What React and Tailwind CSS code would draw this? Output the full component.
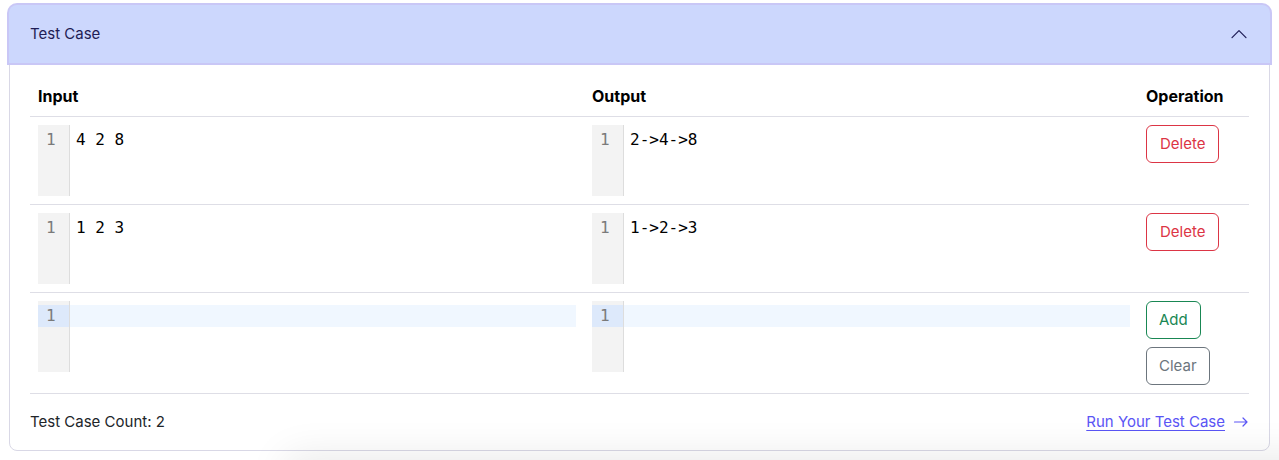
import React from "react";

function Editor({ text, active }) {
  return (
    <div className="flex h-[71px] w-full bg-white">
      <div className="w-[32px] shrink-0 bg-[#f3f3f3] border-r border-[#dddddd] pt-[4px]">
        <div
          className={
            "h-[22px] leading-[22px] pl-[8px] text-[16px] text-[#7a7a7a] font-['DejaVu_Sans_Mono',monospace] " +
            (active ? "bg-[#dde9fb]" : "")
          }
        >
          1
        </div>
      </div>
      <div className="flex-1 pt-[4px]">
        <div
          className={
            "h-[22px] leading-[22px] pl-[6px] text-[16px] text-black font-['DejaVu_Sans_Mono',monospace] whitespace-pre " +
            (active ? "bg-[#f0f7ff]" : "")
          }
        >
          {text}
        </div>
      </div>
    </div>
  );
}

function Row({ input, output, children }) {
  return (
    <div className="grid grid-cols-[554px_554px_1fr] border-b border-[#dedee6]">
      <div className="p-2">{input}</div>
      <div className="p-2">{output}</div>
      <div className="p-2 flex flex-col items-start gap-[8px]">{children}</div>
    </div>
  );
}

function Btn({ color, children }) {
  const cls = {
    red: "border-[#dc3545] text-[#dc3545] px-[13px]",
    green: "border-[#198754] text-[#198754] px-3",
    gray: "border-[#6c757d] text-[#6c757d] px-3",
  }[color];
  return (
    <button
      className={
        "h-[38px] border rounded-[6px] bg-white text-[15px] leading-[24px] " + cls
      }
    >
      {children}
    </button>
  );
}

export default function App() {
  return (
    <div className="w-[1279px] h-[460px] bg-white overflow-hidden relative font-['Inter',sans-serif] text-[#212529]">
      <div className="mx-[9px] mt-[5px] border border-[#d9d8e6] rounded-[8px] bg-white">
        <div className="relative z-10 h-[58px] -mx-px -mt-px flex items-center justify-between px-[21px] bg-[#ccd7fd] rounded-t-[8px] shadow-[0_0_0_2px_#c9c7f6] text-[#1f1d55] text-[15px]">
          <span>Test Case</span>
          <svg width="18" height="18" viewBox="0 0 16 16" className="mr-[1px]">
            <path
              d="M1.8 11.2 8 5l6.2 6.2"
              fill="none"
              stroke="#1f1d55"
              strokeWidth="1.1"
              strokeLinecap="round"
              strokeLinejoin="round"
            />
          </svg>
        </div>
        <div className="px-5 pt-[13px]">
          <div className="grid grid-cols-[554px_554px_1fr] border-b border-[#dedee6] font-bold text-[16px] text-black">
            <div className="p-2 leading-[24px]">Input</div>
            <div className="p-2 leading-[24px]">Output</div>
            <div className="p-2 leading-[24px]">Operation</div>
          </div>
          <Row input={<Editor text="4 2 8" />} output={<Editor text="2->4->8" />}>
            <Btn color="red">Delete</Btn>
          </Row>
          <Row input={<Editor text="1 2 3" />} output={<Editor text="1->2->3" />}>
            <Btn color="red">Delete</Btn>
          </Row>
          <Row input={<Editor text="" active />} output={<Editor text="" active />}>
            <Btn color="green">Add</Btn>
            <Btn color="gray">Clear</Btn>
          </Row>
          <div className="flex items-center justify-between h-[56px] text-[15px]">
            <span className="text-[#212529]">Test Case Count: 2</span>
            <a className="text-[#5a55f5] flex items-center gap-2 cursor-pointer">
              <span className="underline underline-offset-[3px]">Run Your Test Case</span>
              <svg width="16" height="16" viewBox="0 0 16 16">
                <path
                  d="M1.5 8h12.5M10 4l4 4-4 4"
                  fill="none"
                  stroke="#5a55f5"
                  strokeWidth="1.2"
                  strokeLinecap="round"
                  strokeLinejoin="round"
                />
              </svg>
            </a>
          </div>
        </div>
      </div>
      <div className="absolute left-[300px] right-[-40px] top-[470px] h-[40px] bg-white shadow-[0_0_40px_14px_rgba(0,0,0,0.09)]"></div>
    </div>
  );
}
